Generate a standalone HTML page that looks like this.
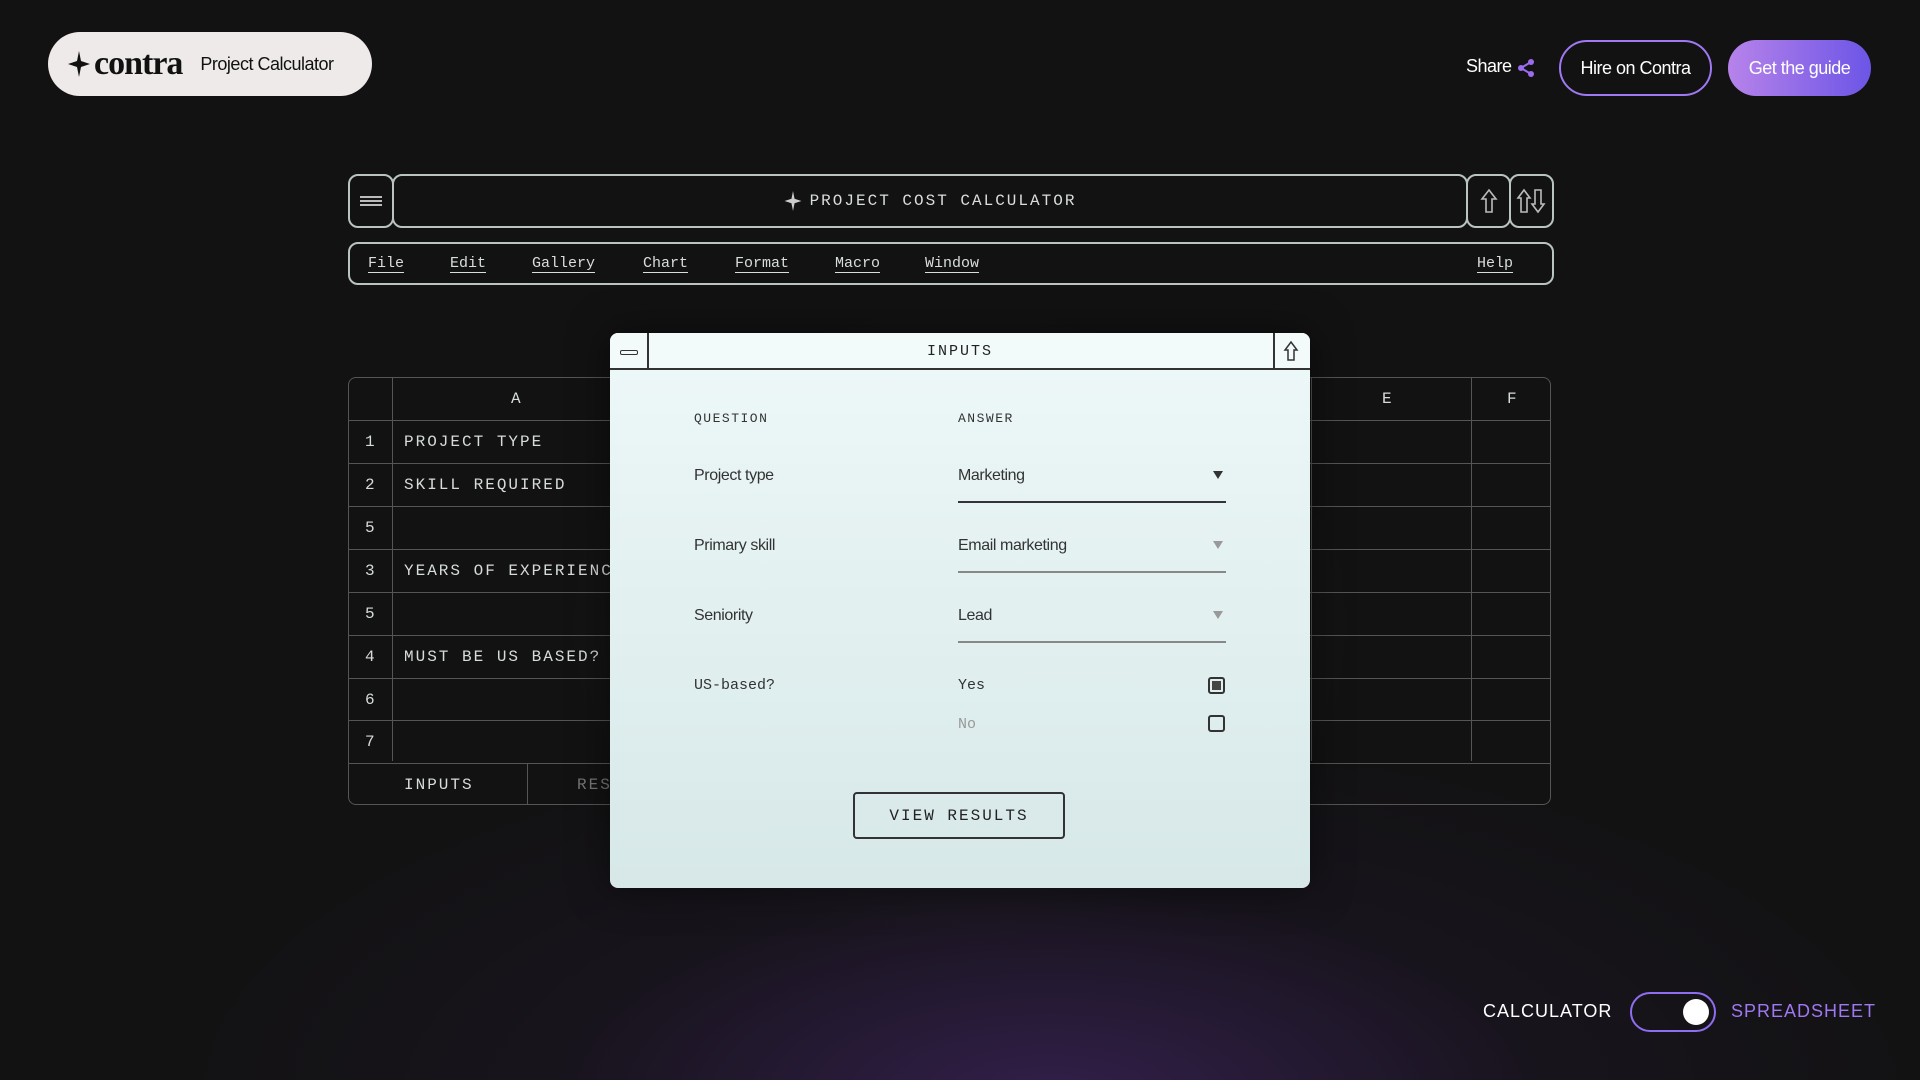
<!DOCTYPE html>
<html style="overflow:hidden;width:1920px;height:1080px"><head><meta charset="utf-8"><style>
*{box-sizing:border-box;margin:0;padding:0}
body{width:1920px;height:1080px;overflow:hidden;background:#121212;font-family:"Liberation Sans",sans-serif;color:#fff;position:relative}
.glow{position:absolute;left:0;top:0;width:1920px;height:1080px;background:radial-gradient(ellipse 900px 380px at 1050px 1100px,rgba(72,40,112,.6),rgba(40,25,60,.25) 55%,rgba(18,18,18,0) 100%)}
.glow2{position:absolute;left:560px;top:300px;width:800px;height:650px;background:radial-gradient(ellipse at center,rgba(60,60,60,.35),rgba(18,18,18,0) 70%)}
.mono{font-family:"Liberation Mono",monospace}
.abs{position:absolute}
.logo{left:48px;top:32px;width:324px;height:64px;border-radius:32px;background:#efeaea;color:#111;display:flex;align-items:center;padding-left:20px}
.logo b{font-family:"Liberation Serif",serif;font-size:34px;font-weight:bold;letter-spacing:-1px;margin-left:4px}
.logo span{font-size:18px;margin-left:18px;letter-spacing:-.5px}
.btn{height:56px;border-radius:28px;display:flex;align-items:center;justify-content:center;font-size:18px;letter-spacing:-.5px}
.box{border:2px solid #b9c4c2;border-radius:10px}
.menu span{position:absolute;top:11px;font-size:15px;color:#d8dedd;text-decoration:underline;text-underline-offset:5px;text-decoration-thickness:1px}
.grid{left:348px;top:377px;width:1203px;height:428px;border:1px solid #555;border-radius:8px;overflow:hidden}
.hl{position:absolute;left:0;right:0;height:1px;background:#555}
.vl{position:absolute;top:0;bottom:0;width:1px;background:#555}
.cell{position:absolute;font-size:16px;color:#d6dcdb;letter-spacing:2px}
.modal{left:610px;top:333px;width:700px;height:555px;border-radius:8px;background:linear-gradient(#eef8f8,#d7e8e8);color:#222;overflow:hidden;box-shadow:0 0 40px rgba(0,0,0,.5)}
.lbl{position:absolute;font-size:16px;letter-spacing:-.4px;color:#333}
.ul{position:absolute;left:348px;width:268px;height:2px;background:#888}
.tri{position:absolute;left:603px;width:0;height:0;border-left:5px solid transparent;border-right:5px solid transparent;border-top:8px solid #999}
</style></head><body>
<div class="glow"></div><div class="glow2"></div>

<div class="abs logo"><svg width="22" height="26" viewBox="0 0 22 26"><path d="M11 0 L13 10 L22 13 L13 16 L11 26 L9 16 L0 13 L9 10Z" fill="#111"/></svg><b>contra</b><span>Project Calculator</span></div>

<div class="abs" style="left:1466px;top:56px;font-size:18px;letter-spacing:-.5px">Share</div>
<svg class="abs" style="left:1516px;top:58px" width="20" height="20" viewBox="0 0 20 20"><circle cx="15" cy="4" r="3" fill="#9b6cf0"/><circle cx="5" cy="10" r="3" fill="#9b6cf0"/><circle cx="15" cy="16" r="3" fill="#9b6cf0"/><path d="M15 4L5 10L15 16" stroke="#9b6cf0" stroke-width="2" fill="none"/></svg>
<div class="abs btn" style="left:1559px;top:40px;width:153px;border:2px solid #9f78f2">Hire on Contra</div>
<div class="abs btn" style="left:1728px;top:40px;width:143px;background:linear-gradient(90deg,#b783ea,#6c55e6)">Get the guide</div>

<div class="abs box" style="left:348px;top:174px;width:46px;height:54px"><div style="position:absolute;left:10px;top:20px;width:22px;height:10px;border:2px solid #bbb;border-left:none;border-right:none"></div><div style="position:absolute;left:10px;top:24px;width:22px;height:2px;background:#bbb"></div></div>
<div class="abs box mono" style="left:392px;top:174px;width:1076px;height:54px;display:flex;align-items:center;justify-content:center;font-size:16px;letter-spacing:2px;color:#d8dedd"><svg width="18" height="20" viewBox="0 0 22 26" style="margin-right:8px"><path d="M11 0 L13 10 L22 13 L13 16 L11 26 L9 16 L0 13 L9 10Z" fill="#ccc"/></svg>PROJECT COST CALCULATOR</div>
<div class="abs box" style="left:1466px;top:174px;width:45px;height:54px;display:flex;align-items:center;justify-content:center"><svg width="18" height="26" viewBox="0 0 18 26"><path d="M9 2L16 11H12V24H6V11H2Z" fill="none" stroke="#bbb" stroke-width="1.6"/></svg></div>
<div class="abs box" style="left:1509px;top:174px;width:45px;height:54px;display:flex;align-items:center;justify-content:center"><svg width="32" height="26" viewBox="0 0 32 26"><path d="M8 2L14 10H11V24H5V10H2Z M22 24L28 16H25V2H19V16H16Z" fill="none" stroke="#bbb" stroke-width="1.6"/></svg></div>

<div class="abs box mono menu" style="left:348px;top:242px;width:1206px;height:43px">
<span style="left:18px">File</span><span style="left:100px">Edit</span><span style="left:182px">Gallery</span><span style="left:293px">Chart</span><span style="left:385px">Format</span><span style="left:485px">Macro</span><span style="left:575px">Window</span><span style="left:1127px">Help</span></div>

<div class="abs grid mono">
<div class="vl" style="left:43px;bottom:43px"></div><div class="vl" style="left:962px;bottom:43px"></div><div class="vl" style="left:1122px;bottom:43px"></div><div class="vl" style="left:178px;top:385px"></div>
<div class="hl" style="top:42px"></div><div class="hl" style="top:85px"></div><div class="hl" style="top:128px"></div><div class="hl" style="top:171px"></div><div class="hl" style="top:214px"></div><div class="hl" style="top:257px"></div><div class="hl" style="top:300px"></div><div class="hl" style="top:342px"></div><div class="hl" style="top:385px"></div>
<div class="cell" style="left:162px;top:12px">A</div><div class="cell" style="left:1033px;top:12px">E</div><div class="cell" style="left:1158px;top:12px">F</div>
<div class="cell" style="left:16px;top:55px">1</div><div class="cell" style="left:55px;top:55px">PROJECT TYPE</div>
<div class="cell" style="left:16px;top:98px">2</div><div class="cell" style="left:55px;top:98px">SKILL REQUIRED</div>
<div class="cell" style="left:16px;top:141px">5</div>
<div class="cell" style="left:16px;top:184px">3</div><div class="cell" style="left:55px;top:184px">YEARS OF EXPERIENCE</div>
<div class="cell" style="left:16px;top:227px">5</div>
<div class="cell" style="left:16px;top:270px">4</div><div class="cell" style="left:55px;top:270px">MUST BE US BASED?</div>
<div class="cell" style="left:16px;top:313px">6</div><div class="cell" style="left:16px;top:355px">7</div>
<div class="cell" style="left:55px;top:398px">INPUTS</div><div class="cell" style="left:228px;top:398px;color:#777">RESULTS</div>
</div>

<div class="abs modal">
<div style="position:absolute;left:0;top:0;right:0;height:37px;border-bottom:2px solid #333;background:#f2fafa"></div>
<div style="position:absolute;left:37px;top:0;width:2px;height:37px;background:#333"></div>
<div style="position:absolute;left:663px;top:0;width:2px;height:37px;background:#333"></div>
<div style="position:absolute;left:10px;top:17px;width:18px;height:5px;border:1.5px solid #333;border-radius:2px"></div>
<svg style="position:absolute;left:673px;top:7px" width="16" height="22" viewBox="0 0 16 22"><path d="M8 2L14 10H11V20H5V10H2Z" fill="none" stroke="#333" stroke-width="1.5"/></svg>
<div class="mono" style="position:absolute;left:0;right:0;top:10px;text-align:center;font-size:15px;letter-spacing:2px">INPUTS</div>
<div class="mono" style="position:absolute;left:84px;top:78px;font-size:13px;letter-spacing:1.5px;color:#333">QUESTION</div>
<div class="mono" style="position:absolute;left:348px;top:78px;font-size:13px;letter-spacing:1.5px;color:#333">ANSWER</div>
<div class="lbl" style="left:84px;top:134px">Project type</div><div class="lbl" style="left:348px;top:134px">Marketing</div>
<div class="tri" style="top:138px;border-top-color:#333"></div><div class="ul" style="top:168px;background:#333"></div>
<div class="lbl" style="left:84px;top:204px">Primary skill</div><div class="lbl" style="left:348px;top:204px">Email marketing</div>
<div class="tri" style="top:208px"></div><div class="ul" style="top:238px"></div>
<div class="lbl" style="left:84px;top:274px">Seniority</div><div class="lbl" style="left:348px;top:274px">Lead</div>
<div class="tri" style="top:278px"></div><div class="ul" style="top:308px"></div>
<div class="lbl mono" style="left:84px;top:344px;font-size:15px;letter-spacing:0">US-based?</div>
<div class="lbl mono" style="left:348px;top:344px;font-size:15px;letter-spacing:0">Yes</div>
<div class="lbl mono" style="left:348px;top:383px;font-size:15px;letter-spacing:0;color:#999">No</div>
<div style="position:absolute;left:598px;top:344px;width:17px;height:17px;border:2px solid #333;border-radius:3px;padding:2px"><div style="width:100%;height:100%;background:#444"></div></div>
<div style="position:absolute;left:598px;top:382px;width:17px;height:17px;border:2px solid #333;border-radius:3px"></div>
<div class="mono" style="position:absolute;left:243px;top:459px;width:212px;height:47px;border:2px solid #333;border-radius:4px;display:flex;align-items:center;justify-content:center;font-size:16px;letter-spacing:2px">VIEW RESULTS</div>
</div>

<div class="abs" style="left:1483px;top:1001px;font-size:18px;letter-spacing:1px">CALCULATOR</div>
<div class="abs" style="left:1630px;top:992px;width:86px;height:40px;border:2px solid #8f6df0;border-radius:20px"><div style="position:absolute;right:5px;top:5px;width:26px;height:26px;border-radius:50%;background:#fff"></div></div>
<div class="abs" style="left:1731px;top:1001px;font-size:18px;letter-spacing:1px;color:#9f78f2">SPREADSHEET</div>
</body></html>
